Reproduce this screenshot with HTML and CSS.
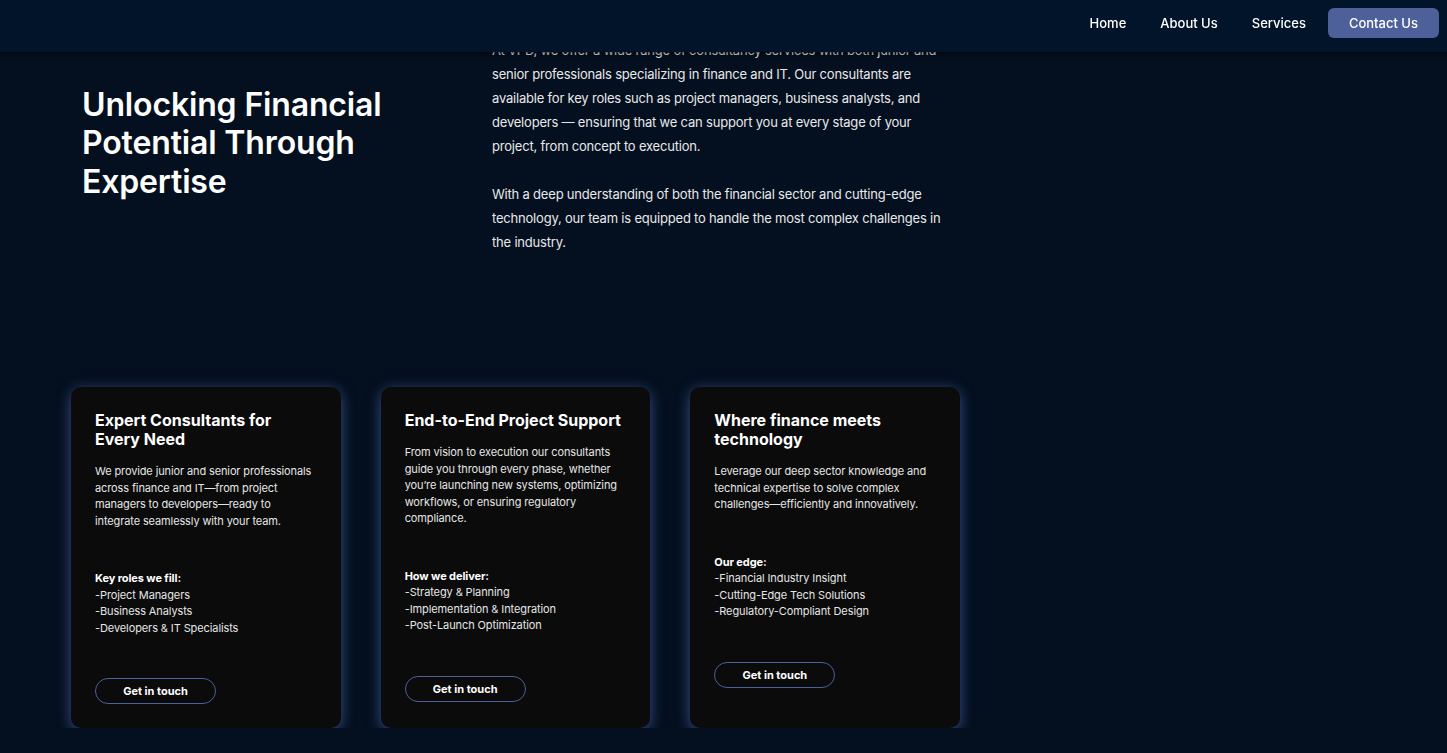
FILE: index.html
```html
<!DOCTYPE html>
<html lang="en">
<head>
<meta charset="utf-8">
<title>VPD — Services</title>
<link rel="stylesheet" href="styles.css">
</head>
<body>
<header class="topbar">
  <nav class="nav">
    <a class="nav-link" href="#">Home</a>
    <a class="nav-link" href="#">About Us</a>
    <a class="nav-link" href="#">Services</a>
    <a class="nav-cta" href="#">Contact Us</a>
  </nav>
</header>

<main class="page">
  <section class="hero">
    <h1 class="hero-title">Unlocking Financial Potential Through Expertise</h1>
    <div class="hero-text">
      <p>At VPD, we offer a wide range of consultancy services with both junior and senior professionals specializing in finance and IT. Our consultants are available for key roles such as project managers, business analysts, and developers — ensuring that we can support you at every stage of your project, from concept to execution.</p>
      <p>With a deep understanding of both the financial sector and cutting-edge technology, our team is equipped to handle the most complex challenges in the industry.</p>
    </div>
  </section>

  <section class="cards">
    <article class="card">
      <h3 class="card-title">Expert Consultants for Every Need</h3>
      <p class="card-text">We provide junior and senior professionals across finance and IT—from project managers to developers—ready to integrate seamlessly with your team.</p>
      <div class="card-list">
        <strong>Key roles we fill:</strong>
        <span>-Project Managers</span>
        <span>-Business Analysts</span>
        <span>-Developers &amp; IT Specialists</span>
      </div>
      <a class="card-btn" href="#">Get in touch</a>
    </article>
    <article class="card">
      <h3 class="card-title">End-to-End Project Support</h3>
      <p class="card-text">From vision to execution our consultants guide you through every phase, whether you’re launching new systems, optimizing workflows, or ensuring regulatory compliance.</p>
      <div class="card-list">
        <strong>How we deliver:</strong>
        <span>-Strategy &amp; Planning</span>
        <span>-Implementation &amp; Integration</span>
        <span>-Post-Launch Optimization</span>
      </div>
      <a class="card-btn" href="#">Get in touch</a>
    </article>
    <article class="card">
      <h3 class="card-title">Where finance meets technology</h3>
      <p class="card-text">Leverage our deep sector knowledge and technical expertise to solve complex challenges—efficiently and innovatively.</p>
      <div class="card-list">
        <strong>Our edge:</strong>
        <span>-Financial Industry Insight</span>
        <span>-Cutting-Edge Tech Solutions</span>
        <span>-Regulatory-Compliant Design</span>
      </div>
      <a class="card-btn" href="#">Get in touch</a>
    </article>
  </section>
</main>
</body>
</html>
```

FILE: styles.css
```css
* { box-sizing: border-box; }

html, body {
  margin: 0;
  padding: 0;
  background: #04101f;
  color: #ffffff;
  font-family: Inter, "Noto Sans", "Liberation Sans", sans-serif;
  overflow: hidden;
}

.topbar {
  position: fixed;
  top: 0;
  left: 0;
  right: 0;
  height: 52px;
  background: #02142a;
  box-shadow: 0 2px 5px rgba(0, 0, 0, 0.55);
  display: flex;
  justify-content: flex-end;
  align-items: flex-start;
  padding: 8px 8px 0 0;
  z-index: 10;
}

.nav {
  display: flex;
  align-items: center;
}

.nav-link {
  color: #ffffff;
  text-decoration: none;
  font-size: 13px;
  font-weight: 500;
  padding: 0 17px;
  line-height: 30px;
}

.nav-cta {
  margin-left: 5px;
  color: #ffffff;
  text-decoration: none;
  font-size: 13px;
  font-weight: 500;
  background: #4e6099;
  border-radius: 6px;
  height: 30px;
  line-height: 30px;
  padding: 0 21px;
}

.page {
  width: 889px;
  margin-left: 71px;
  padding-top: 38px;
}

.hero {
  display: grid;
  grid-template-columns: 410px 460px;
  align-items: center;
  padding-left: 11px;
}

.hero-title {
  margin: 0 0 5px;
  font-size: 32px;
  line-height: 38.5px;
  font-weight: 600;
  letter-spacing: -0.15px;
  color: #ffffff;
  max-width: 330px;
}

.hero-text p {
  margin: 0 0 24px;
  font-size: 13px;
  line-height: 24px;
  letter-spacing: -0.2px;
  color: #e8e8ea;
}
.hero-text p:last-child { margin-bottom: 0; }

.cards {
  display: flex;
  gap: 40px;
  margin-top: 133px;
  align-items: stretch;
}

.card {
  width: 270px;
  background: #0b0b0b;
  border-radius: 10px;
  padding: 24px 24px 24px;
  box-shadow: 0 3px 14px rgba(78, 104, 182, 0.7);
  display: flex;
  flex-direction: column;
  align-items: flex-start;
}

.card-title {
  margin: 0;
  font-size: 16px;
  line-height: 19px;
  font-weight: 700;
  color: #ffffff;
}

.card-text {
  margin: 14px 0 0;
  font-size: 11px;
  line-height: 16.5px;
  letter-spacing: -0.12px;
  color: #e6e6e6;
}

.card-list {
  margin-top: 41px;
  display: flex;
  flex-direction: column;
  font-size: 11px;
  line-height: 16.5px;
  letter-spacing: -0.1px;
  color: #e6e6e6;
}

.card-list strong {
  font-weight: 700;
  color: #ffffff;
}

.card-btn {
  margin-top: 42px;
  width: 121px;
  height: 26px;
  line-height: 24px;
  text-align: center;
  border: 1px solid #4a5f9c;
  border-radius: 13px;
  color: #ffffff;
  font-size: 11px;
  font-weight: 700;
  text-decoration: none;
}
```
